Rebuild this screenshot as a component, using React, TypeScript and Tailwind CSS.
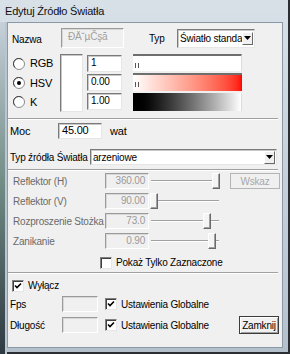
import React from "react";

const sunken =
  "bg-white border border-t-[#7a7a7a] border-l-[#7a7a7a] border-b-[#e6e6e6] border-r-[#e6e6e6] shadow-[inset_1px_1px_0_#c8c8c8]";
const sunkenDis =
  "bg-[#f0f0f0] border border-t-[#9a9a9a] border-l-[#9a9a9a] border-b-[#ffffff] border-r-[#ffffff] shadow-[inset_1px_1px_0_#d8d8d8]";

function Sep() {
  return <div className="w-[270px] h-[2px] border-t border-t-[#a0a0a0] border-b border-b-white" />;
}

function Arrow() {
  return (
    <div className="w-[11px] h-[13px] bg-[#f0f0f0] border border-t-white border-l-white border-b-[#696969] border-r-[#696969] flex items-center justify-center">
      <svg width="7" height="4" viewBox="0 0 7 4">
        <path d="M0 0 L7 0 L3.5 4 Z" fill="#000" />
      </svg>
    </div>
  );
}

function Check({ checked }: { checked?: boolean }) {
  return (
    <div className="w-[12px] h-[12px] bg-white border border-t-[#808080] border-l-[#808080] border-b-[#e6e6e6] border-r-[#e6e6e6] shadow-[inset_1px_1px_0_#404040] flex items-center justify-center shrink-0">
      {checked && (
        <svg width="8" height="8" viewBox="0 0 8 8">
          <path d="M1 3.5 L3 5.5 L7 1.5" stroke="#000" strokeWidth="1.6" fill="none" />
        </svg>
      )}
    </div>
  );
}

function Radio({ checked }: { checked?: boolean }) {
  return (
    <svg width="12" height="12" viewBox="0 0 12 12" className="shrink-0">
      <circle cx="6" cy="6" r="5.5" fill="#fff" stroke="#8a8a8a" />
      <path d="M2 9.5 A5 5 0 0 1 9.5 2" stroke="#404040" strokeWidth="1" fill="none" />
      {checked && <circle cx="6" cy="6" r="2" fill="#000" />}
    </svg>
  );
}

function Slider({ pos }: { pos: number }) {
  return (
    <div className="relative w-[72px] h-[16px] flex items-center">
      <div className="ml-[2px] w-[68px] h-[2px] border-t border-t-[#a0a0a0] border-b border-b-white" />
      <div
        className="absolute top-[0px] w-[8px] h-[16px] bg-[#f4f4f4] border border-t-white border-l-white border-b-[#696969] border-r-[#696969] shadow-[inset_-1px_-1px_0_#a0a0a0]"
        style={{ left: pos }}
      />
    </div>
  );
}

function Row({ label, value, pos, button }: { label: string; value: string; pos: number; button?: boolean }) {
  return (
    <div className="h-[16px] flex items-center">
      <div className="w-[97px] pl-[5px] text-[#6a6a6a] whitespace-nowrap">{label}</div>
      <div className={`w-[44px] h-[16px] ${sunkenDis} text-[#9a9a9a] text-right pr-[3px] leading-[14px]`}>{value}</div>
      <Slider pos={pos} />
      {button && (
        <div className="ml-[9px] w-[50px] h-[16px] bg-[#f0f0f0] border border-[#b5b5b5] text-[#a8a8a8] flex items-center justify-center">
          Wskaz
        </div>
      )}
    </div>
  );
}

export default function App() {
  return (
    <div className="w-[290px] h-[354px] flex flex-col font-['Liberation_Sans',sans-serif] text-[10px] tracking-[-0.2px] text-black bg-gradient-to-b from-[#d8e0e8] to-[#b4c1cd] shadow-[inset_-2px_-2px_0_#2b2f33]">
      <div className="h-[22px] shrink-0 pl-[5px] flex items-center text-[11px] text-[#101010]">Edytuj Źródło Światła</div>
      <div className="flex-1 flex">
        <div className="w-[7px] bg-gradient-to-b from-[#c6d0da] via-[#6f8a84] to-[#2f3a42] shadow-[inset_-2px_0_0_#b9c5d1]" />
        <div className="mr-[7px] mb-[6px] flex-1 bg-[#f0f0f0] border border-[#8b99a7] flex flex-col">
          {/* Nazwa / Typ */}
          <div className="mt-[5px] h-[20px] flex items-center">
            <div className="w-[53px] pl-[4px] pt-[3px]">Nazwa</div>
            <div className={`w-[63px] h-[20px] ${sunkenDis} text-[#a0a0a0] pl-[6px] leading-[16px]`}>ĐÄ˘µČşă</div>
            <div className="w-[53px] pl-[25px]">Typ</div>
            <div className={`w-[78px] h-[19px] ${sunken} flex items-center pl-[2px] pr-[1px]`}>
              <span className="flex-1 overflow-hidden whitespace-nowrap">Światło standa</span>
              <Arrow />
            </div>
          </div>

          {/* Colour block */}
          <div className="mt-[6px] h-[58px] flex">
            <div className="w-[52px] pl-[5px] flex flex-col">
              {["RGB", "HSV", "K"].map((l, i) => (
                <div key={l} className="h-[20px] flex items-center gap-[5px]">
                  <Radio checked={i === 1} />
                  <span className="text-[11px]">{l}</span>
                </div>
              ))}
            </div>
            <div className={`w-[23px] h-[58px] ${sunken}`} />
            <div className="ml-[4px] w-[35px] flex flex-col gap-[2px] pt-[1px]">
              {["1", "0.00", "1.00"].map((v) => (
                <div key={v} className={`h-[17px] ${sunken} pl-[3px] leading-[14px]`}>{v}</div>
              ))}
            </div>
            <div className="ml-[11px] w-[109px] flex flex-col gap-[2px]">
              <div className="relative h-[17px] bg-white border-t-2 border-t-[#6e6e6e] border-r border-r-[#dcdcdc]">
                <div className="absolute left-[2px] top-[7px] w-[1px] h-[5px] bg-[#555]" />
                <div className="absolute left-[5px] top-[7px] w-[1px] h-[5px] bg-[#555]" />
              </div>
              <div className="relative h-[18px] bg-gradient-to-r from-white to-[#ff0000] border-t-2 border-t-[#6e6e6e]">
                <div className="absolute left-[2px] top-[7px] w-[1px] h-[5px] bg-[#555]" />
                <div className="absolute left-[5px] top-[7px] w-[1px] h-[5px] bg-[#555]" />
              </div>
              <div className="h-[18px] bg-gradient-to-r from-black to-white border-r border-r-[#dcdcdc]" />
            </div>
          </div>

          <div className="mt-[6px]">
            <Sep />
          </div>

          {/* Moc */}
          <div className="mt-[3px] h-[16px] flex items-center">
            <div className="w-[50px] pl-[2px] text-[11px]">Moc</div>
            <div className={`w-[44px] h-[16px] ${sunken} pl-[3px] leading-[13px] text-[11px]`}>45.00</div>
            <div className="ml-[8px] text-[11px]">wat</div>
          </div>

          {/* Typ zrodla */}
          <div className="mt-[10px] h-[16px] flex items-center">
            <div className="w-[82px] pl-[2px] whitespace-nowrap">Typ źródła Światła</div>
            <div className={`w-[187px] h-[16px] ${sunken} flex items-center pl-[2px] pr-[1px]`}>
              <span className="flex-1">arzeniowe</span>
              <Arrow />
            </div>
          </div>

          <div className="mt-[4px]">
            <Sep />
          </div>

          <div className="mt-[2px] flex flex-col gap-[4px]">
            <Row label="Reflektor (H)" value="360.00" pos={63} button />
            <Row label="Reflektor (V)" value="90.00" pos={1} />
            <Row label="Rozproszenie Stożka" value="73.0" pos={54} />
            <Row label="Zanikanie" value="0.90" pos={59} />
          </div>

          <div className="mt-[7px] h-[13px] flex items-center pl-[92px]">
            <Check />
            <span className="ml-[4px]">Pokaż Tylko Zaznaczone</span>
          </div>

          <div className="mt-[3px]">
            <Sep />
          </div>

          <div className="mt-[5px] h-[13px] flex items-center pl-[4px]">
            <Check checked />
            <span className="ml-[4px]">Wyłącz</span>
          </div>

          <div className="mt-[4px] h-[16px] flex items-center">
            <div className="w-[54px] pl-[2px]">Fps</div>
            <div className={`w-[36px] h-[16px] ${sunkenDis}`} />
            <div className="ml-[7px]">
              <Check checked />
            </div>
            <span className="ml-[4px]">Ustawienia Globalne</span>
          </div>

          <div className="mt-[4px] h-[18px] flex items-center">
            <div className="w-[54px] pl-[2px]">Długość</div>
            <div className={`w-[36px] h-[16px] ${sunkenDis}`} />
            <div className="ml-[7px]">
              <Check checked />
            </div>
            <span className="ml-[4px]">Ustawienia Globalne</span>
            <div className="ml-auto mr-[3px] w-[40px] h-[18px] bg-[#f0f0f0] border border-[#3c3c3c] shadow-[inset_1px_1px_0_#fff,inset_-1px_-1px_0_#a0a0a0] flex items-center justify-center">
              Zamknij
            </div>
          </div>
        </div>
      </div>
    </div>
  );
}
